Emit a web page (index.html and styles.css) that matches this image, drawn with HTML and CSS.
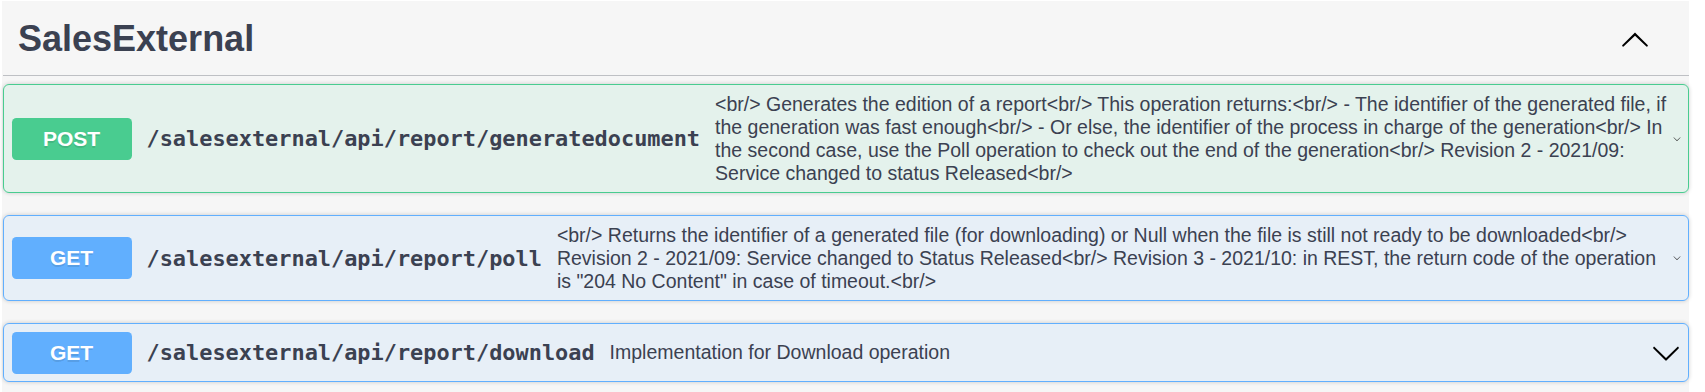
FILE: index.html
```html
<!DOCTYPE html>
<html>

<head>
  <meta charset="utf-8" />
  <title>SalesExternal</title>
  <link rel="stylesheet" href="styles.css">
</head>

<body>
  <div class="tag-section">
    <h4 class="opblock-tag">
      <span class="tag-name">SalesExternal</span>
      <small class="tag-description"></small>
      <button class="expand-operation">
        <svg class="arrow" viewBox="0 0 20 20">
          <path d="M17.418 14.908c.272.268.709.268.979 0s.271-.701 0-.969l-7.908-7.83c-.27-.268-.707-.268-.979 0l-7.908 7.83c-.27.268-.27.701 0 .969.271.268.709.268.979 0L10 7.767l7.418 7.141z" />
        </svg>
      </button>
    </h4>

    <div class="opblock opblock-post">
      <div class="opblock-summary">
        <span class="method">POST</span>
        <span class="path">/salesexternal/api/report/generatedocument</span>
        <div class="description">
          &lt;br/&gt; Generates the edition of a report&lt;br/&gt; This operation returns:&lt;br/&gt; - The identifier of the generated file, if the generation was fast enough&lt;br/&gt; - Or else, the identifier of the process in charge of the generation&lt;br/&gt; In the second case, use the Poll operation to check out the end of the generation&lt;br/&gt; Revision 2 - 2021/09: Service changed to status Released&lt;br/&gt;
        </div>
        <svg class="arrow arrow-squeezed" viewBox="0 0 20 20">
          <path d="M17.418 6.109c.272-.268.709-.268.979 0s.271.701 0 .969l-7.908 7.83c-.27.268-.707.268-.979 0l-7.908-7.83c-.27-.268-.27-.701 0-.969.271-.268.709-.268.979 0L10 13.25l7.418-7.141z" />
        </svg>
      </div>
    </div>

    <div class="opblock opblock-get">
      <div class="opblock-summary">
        <span class="method">GET</span>
        <span class="path">/salesexternal/api/report/poll</span>
        <div class="description">
          &lt;br/&gt; Returns the identifier of a generated file (for downloading) or Null when the file is still not ready to be downloaded&lt;br/&gt; Revision 2 - 2021/09: Service changed to Status Released&lt;br/&gt; Revision 3 - 2021/10: in REST, the return code of the operation is "204 No Content" in case of timeout.&lt;br/&gt;
        </div>
        <svg class="arrow arrow-squeezed" viewBox="0 0 20 20">
          <path d="M17.418 6.109c.272-.268.709-.268.979 0s.271.701 0 .969l-7.908 7.83c-.27.268-.707.268-.979 0l-7.908-7.83c-.27-.268-.27-.701 0-.969.271-.268.709-.268.979 0L10 13.25l7.418-7.141z" />
        </svg>
      </div>
    </div>

    <div class="opblock opblock-get">
      <div class="opblock-summary">
        <span class="method">GET</span>
        <span class="path">/salesexternal/api/report/download</span>
        <div class="description">
          Implementation for Download operation
        </div>
        <svg class="arrow" viewBox="0 0 20 20">
          <path d="M17.418 6.109c.272-.268.709-.268.979 0s.271.701 0 .969l-7.908 7.83c-.27.268-.707.268-.979 0l-7.908-7.830c-.27-.268-.27-.701 0-.969.271-.268.709-.268.979 0L10 13.25l7.418-7.141z" />
        </svg>
      </div>
    </div>
  </div>
</body>

</html>
```

FILE: styles.css
```css
* {
  box-sizing: border-box;
}

html,
body {
  margin: 0;
  padding: 0;
  background-color: #fff;
  font-family: "Liberation Sans", Arial, sans-serif;
  color: #3b4151;
  overflow: hidden;
}

.tag-section {
  margin: 1px 16px 0 2px;
  padding: 2px 0 1px 1px;
  background-color: #f6f6f6;
}

.opblock-tag {
  display: flex;
  align-items: center;
  margin: 0 0 8px;
  padding: 15px 30px 15px 15px;
  border-bottom: 1px solid rgba(59, 65, 81, 0.3);
  font-size: 36px;
  font-weight: 700;
}

.tag-description {
  flex: 1;
  padding: 0 15px;
  font-size: 21px;
  font-weight: 400;
}

.expand-operation {
  display: flex;
  align-items: center;
  padding: 0 9px;
  border: none;
  background: none;
}

.arrow {
  width: 30px;
  height: 30px;
  flex: 0 0 auto;
  fill: #000;
}

.arrow-squeezed {
  width: 8px;
  fill: #333;
}

.opblock {
  margin: 0 0 22px;
  border: 1px solid #000;
  border-radius: 6px;
  box-shadow: 0 0 4px rgba(0, 0, 0, 0.19);
}

.opblock-post {
  border-color: #49cc90;
  background-color: rgba(73, 204, 144, 0.1);
}

.opblock-get {
  border-color: #61affe;
  background-color: rgba(97, 175, 254, 0.1);
}

.opblock-summary {
  display: flex;
  align-items: center;
  padding: 7.5px;
}

.method {
  flex: 0 0 auto;
  min-width: 120px;
  padding: 9px 0;
  border-radius: 4.5px;
  font-size: 21px;
  font-weight: 700;
  text-align: center;
  color: #fff;
  text-shadow: 0 1.5px 0 rgba(0, 0, 0, 0.1);
}

.opblock-post .method {
  background-color: #49cc90;
}

.opblock-get .method {
  background-color: #61affe;
}

.path {
  flex: 0 0 auto;
  padding: 0 15px;
  font-family: "DejaVu Sans Mono", "Liberation Mono", monospace;
  font-size: 21.9px;
  font-weight: 700;
  color: #3b4151;
}

.description {
  flex: 1 1 auto;
  font-size: 19.5px;
  color: #3b4151;
  word-break: break-word;
}
```
